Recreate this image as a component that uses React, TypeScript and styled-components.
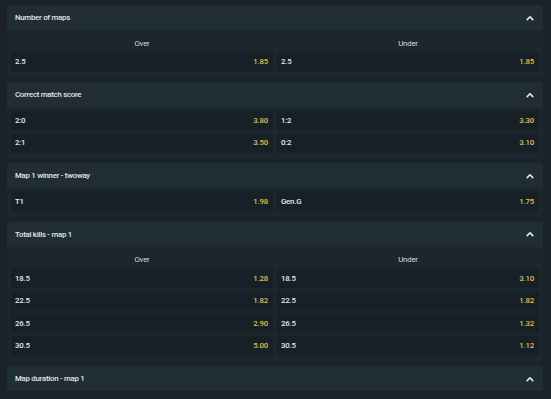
import React from "react";
import styled, { createGlobalStyle } from "styled-components";

const Global = createGlobalStyle`
  html, body { margin: 0; padding: 0; background: #1a2329; }
  body { font-family: Roboto, Lato, Arial, sans-serif; -webkit-font-smoothing: antialiased; }
`;

const Page = styled.div`
  width: 551px;
  height: 399px;
  overflow: hidden;
  box-sizing: border-box;
  padding: 5px 8px 0 7px;
  display: flex;
  flex-direction: column;
  gap: 5.5px;
  background: #1a2329;
`;

const Card = styled.section`
  display: flex;
  flex-direction: column;
  background: #1c272d;
  border-radius: 3px;
  flex-shrink: 0;
`;

const Header = styled.div`
  height: 25px;
  display: flex;
  align-items: center;
  justify-content: space-between;
  padding: 0 9px 0 8px;
  background: #202d33;
  border-radius: 3px 3px 0 0;
  color: #e3e7e9;
  font-size: 7.8px;
  letter-spacing: -0.25px;
  font-weight: 500;
`;

const Body = styled.div`
  display: grid;
  grid-template-columns: 1fr 1fr;
  column-gap: 4px;
  row-gap: 2.5px;
  padding: 3px 4px 5px 4px;
`;

const ColLabel = styled.div`
  height: 12px;
  margin-top: 4px;
  display: flex;
  align-items: center;
  justify-content: center;
  color: #d5dadd;
  font-size: 7.8px;
  letter-spacing: -0.2px;
  font-weight: 400;
`;

const Row = styled.div`
  height: 20px;
  display: flex;
  align-items: center;
  justify-content: space-between;
  padding: 0 5px 0 4px;
  background: #172027;
  border-radius: 2px;
  font-size: 7.8px;
  letter-spacing: -0.2px;
`;

const Name = styled.span`
  color: #e6e9eb;
  font-weight: 500;
`;

const Odds = styled.span`
  color: #dcc251;
  font-weight: 500;
`;

const Chevron = () => (
  <svg width="8" height="6" viewBox="0 0 8 6">
    <path d="M1.2 4.6 L4 1.8 L6.8 4.6" fill="none" stroke="#e8ecee" strokeWidth="1.6" strokeLinecap="round" strokeLinejoin="round" />
  </svg>
);

type Cell = [string, string];
type Market = { title: string; labels?: [string, string]; rows: [Cell, Cell][] };

const markets: Market[] = [
  { title: "Number of maps", labels: ["Over", "Under"], rows: [[["2.5", "1.85"], ["2.5", "1.85"]]] },
  {
    title: "Correct match score",
    rows: [
      [["2:0", "3.80"], ["1:2", "3.30"]],
      [["2:1", "3.50"], ["0:2", "3.10"]],
    ],
  },
  { title: "Map 1 winner - twoway", rows: [[["T1", "1.98"], ["Gen.G", "1.75"]]] },
  {
    title: "Total kills - map 1",
    labels: ["Over", "Under"],
    rows: [
      [["18.5", "1.28"], ["18.5", "3.10"]],
      [["22.5", "1.82"], ["22.5", "1.82"]],
      [["26.5", "2.90"], ["26.5", "1.32"]],
      [["30.5", "5.00"], ["30.5", "1.12"]],
    ],
  },
  { title: "Map duration - map 1", rows: [] },
];

export default function App() {
  return (
    <>
      <Global />
      <Page>
        {markets.map((m) => (
          <Card key={m.title}>
            <Header>
              <span>{m.title}</span>
              <Chevron />
            </Header>
            {(m.rows.length > 0 || m.labels) && (
              <Body>
                {m.labels && (
                  <>
                    <ColLabel>{m.labels[0]}</ColLabel>
                    <ColLabel>{m.labels[1]}</ColLabel>
                  </>
                )}
                {m.rows.map((r, i) => (
                  <React.Fragment key={i}>
                    {r.map((c, j) => (
                      <Row key={j}>
                        <Name>{c[0]}</Name>
                        <Odds>{c[1]}</Odds>
                      </Row>
                    ))}
                  </React.Fragment>
                ))}
              </Body>
            )}
          </Card>
        ))}
      </Page>
    </>
  );
}
